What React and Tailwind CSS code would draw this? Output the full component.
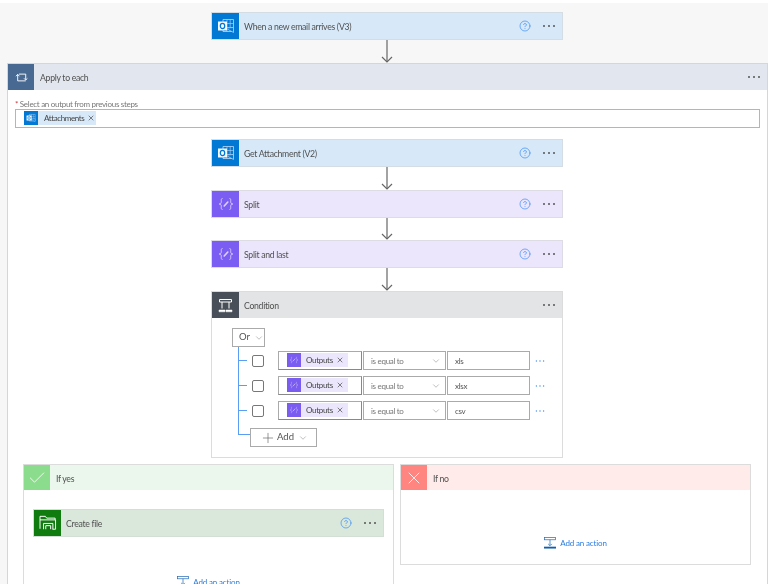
import React from 'react';
import { CircleHelp, X, Check, ChevronDown, Plus } from 'lucide-react';

// Three little dots used on the right of every card header.
const Dots = ({ className = 'text-[#555]', width = 14 }) => (
    <svg width={width} height="4" viewBox="0 0 14 4" className={className}>
        <circle cx="2" cy="2" r="1" fill="currentColor" />
        <circle cx="7" cy="2" r="1" fill="currentColor" />
        <circle cx="12" cy="2" r="1" fill="currentColor" />
    </svg>
);

const OutlookIcon = ({ size = 18 }) => (
    <svg width={size} height={size} viewBox="0 0 18 18" fill="none">
        <path d="M6 2.5h10.5v12H6z" stroke="#bcd9f5" strokeWidth="0.8" />
        <path d="M6 6.5h10.5M6 10.5h10.5M10 2.5v12M13.2 2.5v8" stroke="#bcd9f5" strokeWidth="0.6" />
        <path d="M8.5 11l8 4.5v-5z" fill="#0078d4" stroke="#bcd9f5" strokeWidth="0.7" />
        <rect x="1" y="4.5" width="9" height="9" fill="#f2f8fd" />
        <ellipse cx="5.5" cy="9" rx="2.2" ry="2.6" stroke="#0078d4" strokeWidth="1.2" />
    </svg>
);

const ComposeIcon = ({ size = 18, color = '#dcd2ff' }) => (
    <svg width={size} height={size} viewBox="0 0 18 18" fill="none" stroke={color} strokeWidth="0.9">
        <path d="M5.5 3.5C4 3.5 4.3 5 4.3 6.8 4.3 8.2 3.6 9 2.2 9 3.6 9 4.3 9.8 4.3 11.2 4.3 13 4 14.5 5.5 14.5" />
        <path d="M12.5 3.5C14 3.5 13.7 5 13.7 6.8 13.7 8.2 14.4 9 15.8 9 14.4 9 13.7 9.8 13.7 11.2 13.7 13 14 14.5 12.5 14.5" />
        <path d="M7.2 11L10.8 7" strokeWidth="1.6" strokeLinecap="round" />
    </svg>
);

const LoopIcon = () => (
    <svg width="13" height="11" viewBox="0 0 15 13" fill="none" stroke="#fff" strokeWidth="1.1">
        <path d="M3 3V10.5H12.5" />
        <path d="M12.5 2.5H4.5" />
        <path d="M12.5 2.5V9" />
        <path d="M1 5l2-2.2L5 5" />
        <path d="M10.5 7.5l2 2 2-2" />
    </svg>
);

const ConditionIcon = () => (
    <svg width="15" height="15" viewBox="0 0 15 15" fill="none" stroke="#fff">
        <path d="M1.5 1.5h12v2.5h-12z" strokeWidth="1" />
        <path d="M4 4v6.5M11 4v6.5" strokeWidth="1" />
        <path d="M1 12h6v1.8H1zM8 12h6v1.8H8z" fill="#fff" strokeWidth="0.5" />
    </svg>
);

const FolderIcon = () => (
    <svg width="18" height="16" viewBox="0 0 20 18" fill="none" stroke="#fff" strokeWidth="1.1">
        <path d="M1 15.5V1.5h6l1.5 2H18v2" />
        <path d="M1 5.5h17.5v10.5H15" />
        <path d="M5 16V9.5h10.5V16" />
        <path d="M7.5 16v-4H13v4" />
    </svg>
);

const AddActionIcon = () => (
    <svg width="12" height="12" viewBox="0 0 13 13" fill="none">
        <rect x="0.5" y="0.5" width="12" height="2.5" stroke="#2a6fb8" strokeWidth="0.8" />
        <path d="M6.5 3v6M4.5 7.5l2 2 2-2" stroke="#2a6fb8" strokeWidth="0.8" />
        <rect x="0" y="10.5" width="13" height="2" fill="#0f5fad" />
    </svg>
);

// One action card: coloured icon tile, title, help and menu buttons.
const ActionCard = ({ title, tile, head, border, icon, wide = true }) => (
    <div className={`h-[28px] shrink-0 flex items-stretch border ${wide ? 'w-[352px]' : 'w-[351px]'} ${head} ${border}`}>
        <div className={`w-[27px] flex items-center justify-center shrink-0 ${tile}`}>{icon}</div>
        <div className="flex-1 flex items-center pl-[5px] pt-[2px] text-[#505050] text-[8.7px] tracking-[-0.3px]">{title}</div>
        <CircleHelp size={12} strokeWidth={1.4} className="self-center text-[#3b8cf5] mr-[11px]" />
        <div className="self-center mr-[6px] flex"><Dots /></div>
    </div>
);

const Arrow = ({ height = 24 }) => (
    <div className="flex justify-center w-[352px]" style={{ height }}>
        <svg width="14" height={height} viewBox={`0 0 14 ${height}`} fill="none" stroke="#666" strokeWidth="1.2">
            <path d={`M7 0V${height - 1}`} />
            <path d={`M2 ${height - 6}L7 ${height - 1}L12 ${height - 6}`} />
        </svg>
    </div>
);

const TokenRow = ({ value }) => (
    <div className="flex items-center h-[19px]">
        <div className="w-[8px] h-px bg-[#5a9df5] mr-[5px]" />
        <div className="w-[12px] h-[12px] border border-[#777] rounded-[2px] bg-white mr-[14px]" />
        <div className="w-[84px] h-[19px] border border-[#aaa] border-b-[#888] border-r-[#888] flex items-start pt-px pl-[8px] mr-px">
            <div className="w-[14px] h-[14px] bg-[#7a5cf0] flex items-center justify-center">
                <ComposeIcon size={10} color="#c9b9fb" />
            </div>
            <div className="w-[47px] h-[14px] bg-[#ece6fd] flex items-center pl-[5px] text-[8px] tracking-[-0.3px] text-[#444]">
                Outputs
                <X size={8} strokeWidth={2} className="ml-[3px] text-[#444]" />
            </div>
        </div>
        <div className="w-[83px] h-[19px] border border-[#aaa] flex items-center pl-[7px] pr-[4px] justify-between text-[8px] tracking-[-0.3px] text-[#777] mr-px">
            is equal to
            <ChevronDown size={10} strokeWidth={1} className="text-[#666]" />
        </div>
        <div className="w-[83px] h-[19px] border border-[#aaa] flex items-center pl-[7px] text-[8px] tracking-[-0.3px] text-[#555]">{value}</div>
        <div className="ml-[5px] flex"><Dots width={10} className="text-[#4a90f0]" /></div>
    </div>
);

const ConditionCard = () => (
    <div className="w-[352px] h-[167px] border border-[#dcdcdc] bg-white shrink-0">
        <div className="h-[26px] bg-[#e3e4e5] flex items-center">
            <div className="w-[27px] h-full bg-[#484f58] flex items-center justify-center"><ConditionIcon /></div>
            <div className="flex-1 pl-[5px] pt-[2px] text-[8.7px] tracking-[-0.3px] text-[#505050]">Condition</div>
            <div className="mr-[6px] flex"><Dots /></div>
        </div>
        <div className="pl-[20px] pt-[10px]">
            <div className="w-[33px] h-[19px] border border-[#aaa] flex items-center pl-[6px] gap-[4px] text-[9.5px] text-[#555]">
                Or
                <ChevronDown size={10} strokeWidth={1} className="text-[#666]" />
            </div>
            <div className="ml-[6px] border-l border-[#5a9df5] pt-[4px] h-[88px] flex flex-col gap-[6px] relative">
                <TokenRow value="xls" />
                <TokenRow value="xlsx" />
                <TokenRow value="csv" />
                {/* Tail of the tree line running into the Add button */}
                <div className="absolute left-0 top-[87px] w-[11px] h-px bg-[#5a9df5]" />
                <div className="absolute left-[11px] top-[81px] w-[67px] h-[19px] bg-white border border-[#aaa] flex items-center pl-[9px] text-[9.5px] text-[#555]">
                    <Plus size={16} strokeWidth={0.9} className="mr-px" />
                    Add
                    <ChevronDown size={10} strokeWidth={1} className="ml-[4px] text-[#666]" />
                </div>
            </div>
        </div>
    </div>
);

const AddAction = () => (
    <div className="flex items-center gap-[4px] text-[8px] tracking-[-0.15px] text-[#2b7de0]">
        <AddActionIcon />
        <span className="pt-px">Add an action</span>
    </div>
);

const BranchHeader = ({ title, head, tile, icon }) => (
    <div className={`h-[25px] flex items-center ${head}`}>
        <div className={`w-[26px] h-full flex items-center justify-center ${tile}`}>{icon}</div>
        <div className="pl-[6px] pt-[2px] text-[8.7px] tracking-[-0.3px] text-[#505050]">{title}</div>
    </div>
);

export default function App() {
    return (
        <div className="w-[768px] h-[584px] overflow-hidden bg-[#f7f7f7] flex flex-col blur-[0.4px]" style={{ fontFamily: 'Lato, "Noto Sans", sans-serif' }}>
            <div className="h-[3px] bg-white shrink-0" />

            {/* Trigger */}
            <div className="pl-[211px] pt-[9px] shrink-0">
                <ActionCard title="When a new email arrives (V3)" tile="bg-[#0078d4]" head="bg-[#d7e9f8]" border="border-[#d5dde4]" icon={<OutlookIcon />} />
                <Arrow height={23} />
            </div>

            {/* Apply to each */}
            <div className="ml-[7px] w-[761px] flex-1 flex flex-col border border-b-0 border-[#d6d6d6] bg-white min-h-0">
                <div className="h-[26px] bg-[#e2e6ee] flex items-center shrink-0">
                    <div className="w-[26px] h-full bg-[#486991] flex items-center justify-center"><LoopIcon /></div>
                    <div className="flex-1 pl-[6px] pt-[2px] text-[8.7px] tracking-[-0.3px] text-[#505050]">Apply to each</div>
                    <div className="mr-[6px] flex"><Dots /></div>
                </div>

                <div className="pl-[7px] pt-[9px] text-[8px] tracking-[-0.3px] leading-[10px] text-[#777] shrink-0">
                    <span className="text-[#d13438]">*</span> Select an output from previous steps
                </div>
                <div className="ml-[7px] w-[745px] h-[19px] border border-[#b5b5b5] flex items-start pt-px pl-[8px] shrink-0">
                    <div className="w-[14px] h-[14px] bg-[#0078d4] flex items-center justify-center"><OutlookIcon size={10} /></div>
                    <div className="w-[58px] h-[14px] bg-[#d7e9f8] flex items-center pl-[6px] text-[8px] tracking-[-0.4px] text-[#444]">
                        Attachments
                        <X size={8} strokeWidth={2} className="ml-[3px]" />
                    </div>
                </div>

                {/* Inner steps */}
                <div className="pl-[203px] pt-[11px] shrink-0">
                    <ActionCard title="Get Attachment (V2)" tile="bg-[#0078d4]" head="bg-[#d7e9f8]" border="border-[#d5dde4]" icon={<OutlookIcon />} />
                    <Arrow height={23} />
                    <ActionCard title="Split" tile="bg-[#7c5df3]" head="bg-[#ece6fd]" border="border-[#dddbe4]" icon={<ComposeIcon />} />
                    <Arrow height={22} />
                    <ActionCard title="Split and last" tile="bg-[#7c5df3]" head="bg-[#ece6fd]" border="border-[#dddbe4]" icon={<ComposeIcon />} />
                    <Arrow height={23} />
                    <ConditionCard />
                </div>

                {/* Branches */}
                <div className="flex items-start pl-[15px] pt-[6px] gap-[6px]">
                    <div className="w-[371px] h-[140px] shrink-0 border border-[#dcdcdc] bg-white">
                        <BranchHeader title="If yes" head="bg-[#ebf6ed]" tile="bg-[#8cdc8e]" icon={<Check size={20} strokeWidth={1} className="text-white" />} />
                        <div className="pl-[9px] pt-[19px]">
                            <ActionCard title="Create file" tile="bg-[#107c10]" head="bg-[#dae8dc]" border="border-[#d3dfd5]" icon={<FolderIcon />} wide={false} />
                        </div>
                        <div className="flex justify-center pt-[38px]"><AddAction /></div>
                    </div>
                    <div className="w-[351px] h-[101px] shrink-0 border border-[#dcdcdc] bg-white">
                        <BranchHeader title="If no" head="bg-[#ffecea]" tile="bg-[#ff8580]" icon={<X size={20} strokeWidth={1} className="text-white" />} />
                        <div className="flex justify-center pt-[46px]"><AddAction /></div>
                    </div>
                </div>
            </div>
        </div>
    );
}
